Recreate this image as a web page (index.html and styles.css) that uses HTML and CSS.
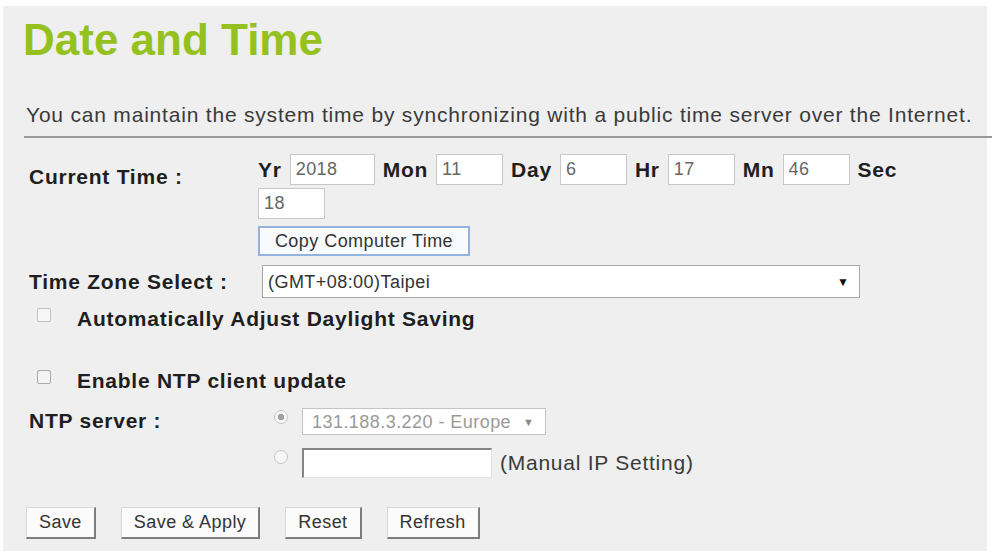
FILE: index.html
```html
<!DOCTYPE html>
<html lang="en">
<head>
    <meta charset="UTF-8">
    <meta name="viewport" content="width=device-width, initial-scale=1.0">
    <title>Date and Time</title>
    <link rel="stylesheet" href="styles.css">
</head>
<body>
    <div class="panel">
        <h1 class="title">Date and Time</h1>
        <p class="intro">You can maintain the system time by synchronizing with a public time server over the Internet.</p>
        <hr class="rule">

        <div class="form">
            <div class="row row-time">
                <div class="label label-time">Current Time :</div>
                <div class="field">
                    <div class="time-fields">
                        <span class="unit">Yr</span><input class="txt txt-year" type="text" value="2018">
                        <span class="unit">Mon</span><input class="txt" type="text" value="11">
                        <span class="unit">Day</span><input class="txt" type="text" value="6">
                        <span class="unit">Hr</span><input class="txt" type="text" value="17">
                        <span class="unit">Mn</span><input class="txt" type="text" value="46">
                        <span class="unit">Sec</span><input class="txt" type="text" value="18">
                    </div>
                    <button class="btn-copy" type="button">Copy Computer Time</button>
                </div>
            </div>

            <div class="row row-zone">
                <div class="label">Time Zone Select :</div>
                <span class="select-wrap zone-wrap">
                    <select class="select select-zone">
                        <option>(GMT+08:00)Taipei</option>
                    </select>
                </span>
            </div>

            <div class="row row-check">
                <input class="check" type="checkbox" disabled>
                <span class="check-text">Automatically Adjust Daylight Saving</span>
            </div>

            <div class="row row-check row-ntp">
                <input class="check check-on" type="checkbox">
                <span class="check-text">Enable NTP client update</span>
            </div>

            <div class="row row-server">
                <div class="label">NTP server :</div>
                <div class="server-lines">
                    <div class="server-line">
                        <input class="radio" type="radio" name="ntp" checked disabled>
                        <span class="select-wrap server-wrap">
                            <select class="select select-server" disabled>
                                <option>131.188.3.220 - Europe</option>
                            </select>
                        </span>
                    </div>
                    <div class="server-line server-manual">
                        <input class="radio" type="radio" name="ntp" disabled>
                        <input class="txt-manual" type="text">
                        <span class="manual-text">(Manual IP Setting)</span>
                    </div>
                </div>
            </div>

            <div class="actions">
                <button class="btn" type="button">Save</button>
                <button class="btn" type="button">Save &amp; Apply</button>
                <button class="btn" type="button">Reset</button>
                <button class="btn" type="button">Refresh</button>
            </div>
        </div>
    </div>
</body>
</html>
```

FILE: styles.css
```css
body {
    margin: 0;
    background-color: #ffffff;
    font-family: "Liberation Sans", Arial, sans-serif;
    color: #333333;
}

.panel {
    margin: 6px 5px 3px 3px;
    height: 545px;
    box-sizing: border-box;
    padding: 9px 0 0 20px;
    background-color: #efefef;
}

.title {
    margin: 0;
    font-size: 44px;
    line-height: 50px;
    font-weight: bold;
    color: #95c11f;
}

.intro {
    margin: 37px 0 0 3px;
    font-size: 21px;
    line-height: 26px;
    letter-spacing: 0.8px;
    color: #3a3a3a;
}

.rule {
    margin: 8px -5px 0 1px;
    height: 0;
    border: none;
    border-top: 2px solid #9a9a9a;
}

.form {
    margin-top: 16px;
    padding-left: 6px;
}

.row {
    display: flex;
}

.label, .unit, .check-text {
    font-size: 21px;
    line-height: 26px;
    font-weight: bold;
    letter-spacing: 0.75px;
    color: #1e1e1e;
}

.label {
    width: 229px;
    flex-shrink: 0;
}

.label-time {
    padding-top: 10px;
}

/* date fields */
.time-fields {
    display: flex;
    flex-wrap: wrap;
    align-items: center;
    width: 680px;
    column-gap: 8px;
    row-gap: 3px;
}

.txt {
    width: 67px;
    height: 31px;
    box-sizing: border-box;
    margin: 0;
    padding: 0 5px;
    border: 1px solid #c8c8c8;
    background-color: #ffffff;
    font-family: "Liberation Sans", Arial, sans-serif;
    font-size: 18px;
    letter-spacing: 0.45px;
    color: #666666;
}

.txt-year {
    width: 85px;
}

.btn-copy {
    display: block;
    margin-top: 7px;
    width: 212px;
    height: 30px;
    padding: 0;
    border: 2px solid #93b3de;
    background-color: #f8fafd;
    font-family: "Liberation Sans", Arial, sans-serif;
    font-size: 18px;
    letter-spacing: 0.45px;
    color: #333333;
}

/* selects */
.select-wrap {
    position: relative;
    display: inline-block;
}

.select-wrap::after {
    content: "\25BC";
    position: absolute;
    top: 50%;
    transform: translateY(-50%);
    font-size: 12px;
    pointer-events: none;
}

.select {
    appearance: none;
    -webkit-appearance: none;
    display: block;
    margin: 0;
    box-sizing: border-box;
    background-color: #ffffff;
    font-family: "Liberation Sans", Arial, sans-serif;
    font-size: 18px;
    letter-spacing: 0.45px;
    border-radius: 0;
}

.row-zone {
    margin-top: 9px;
    align-items: center;
}

.zone-wrap {
    margin-left: 4px;
}

.zone-wrap::after {
    right: 11px;
    color: #111111;
}

.select-zone {
    width: 598px;
    height: 33px;
    padding-left: 5px;
    border: 1px solid #a6a6a6;
    color: #333333;
}

.server-wrap::after {
    right: 12px;
    font-size: 11px;
    color: #8a8a8a;
}

.select-server {
    width: 244px;
    height: 27px;
    padding-left: 9px;
    border: 1px solid #c4c4c4;
    color: #9a9a9a;
    opacity: 1;
}

/* checkboxes */
.row-check {
    margin-top: 8px;
    align-items: flex-start;
}

.row-ntp {
    margin-top: 36px;
}

.check {
    appearance: none;
    -webkit-appearance: none;
    box-sizing: border-box;
    width: 14px;
    height: 14px;
    margin: 2px 26px 0 8px;
    border: 1px solid #c2c2c2;
    border-radius: 2px;
    background-color: #f7f7f7;
}

.check-on {
    border-color: #a8a8a8;
    background-color: #f3f3f3;
}

/* NTP server */
.row-server {
    margin-top: 14px;
}

.server-line {
    display: flex;
    align-items: center;
    height: 27px;
}

.server-manual {
    margin-top: 13px;
    height: 30px;
}

.radio {
    appearance: none;
    -webkit-appearance: none;
    box-sizing: border-box;
    align-self: flex-start;
    width: 14px;
    height: 14px;
    margin: 2px 14px 0 16px;
    border: 1px solid #c8c8c8;
    border-radius: 50%;
    background-color: #f6f6f6;
}

.radio:checked {
    background: radial-gradient(circle, #a0a0a0 0, #a0a0a0 3px, #f6f6f6 3.5px);
}

.txt-manual {
    width: 190px;
    height: 30px;
    box-sizing: border-box;
    margin: 0 8px 0 0;
    border-top: 2px solid #858585;
    border-left: 2px solid #858585;
    border-right: 1px solid #e2e2e2;
    border-bottom: 1px solid #e2e2e2;
    background-color: #ffffff;
}

.manual-text {
    font-size: 21px;
    letter-spacing: 0.75px;
    color: #3a3a3a;
}

/* bottom buttons */
.actions {
    display: flex;
    gap: 25px;
    margin: 29px 0 0 -3px;
}

.btn {
    height: 32px;
    padding: 0 12px;
    border-top: 1px solid #d8d8d8;
    border-left: 1px solid #d8d8d8;
    border-right: 2px solid #7c7c7c;
    border-bottom: 2px solid #7c7c7c;
    background-color: #fbfbfb;
    font-family: "Liberation Sans", Arial, sans-serif;
    font-size: 18px;
    letter-spacing: 0.45px;
    color: #333333;
}
```
